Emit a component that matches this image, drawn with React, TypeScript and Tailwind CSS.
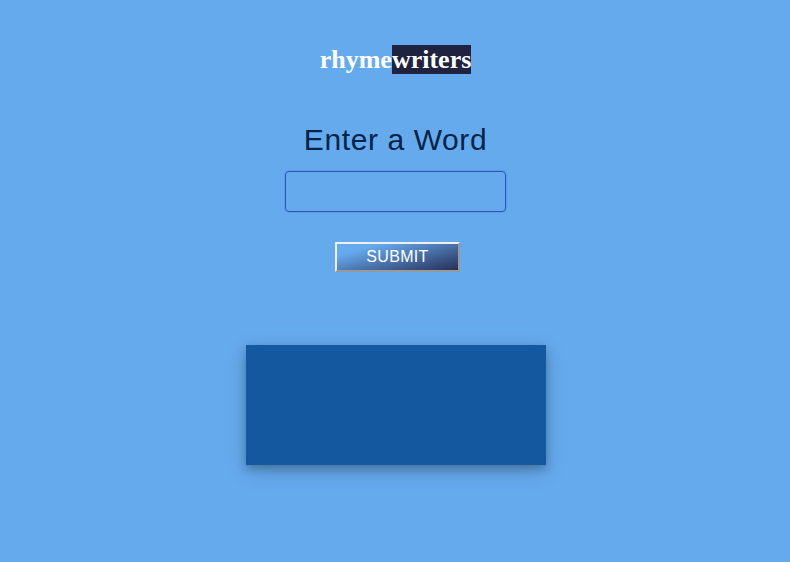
export default function App() {
  return (
    <main className="flex min-h-screen flex-col items-center bg-[#66aaee] pl-px font-['Liberation_Sans',Arial,sans-serif]">
      <h1 className="mt-11 font-['Liberation_Serif','Times_New_Roman',serif] text-[26px] leading-8 font-bold text-white">
        rhyme<span className="bg-[#1f2340]">writers</span>
      </h1>
      <form className="flex flex-col items-center" onSubmit={(e) => e.preventDefault()}>
        <label htmlFor="word" className="mt-11 text-3xl leading-10 tracking-[0.02em] text-[#06244a]">
          Enter a Word
        </label>
        <input
          id="word"
          type="text"
          className="mt-[11px] h-[41px] w-[221px] rounded border border-[#2f55b0] bg-transparent px-3 text-white shadow-[0_0_1px_1px_rgba(70,130,250,0.4)] outline-none"
        />
        <button
          type="submit"
          className="mt-[30px] ml-1 h-[30px] w-[125px] border-2 border-t-[#efefef] border-r-[#999999] border-b-[#999999] border-l-[#efefef] bg-linear-165 from-[#66aaee] from-20% to-[#27315a] text-base leading-6 tracking-[0.02em] text-white"
        >
          SUBMIT
        </button>
      </form>
      <section aria-label="Rhymes" className="mt-[73px] h-[120px] w-[300px] bg-[#1458a0] shadow-[0_4px_8px_0_rgba(0,0,0,0.2),0_6px_20px_0_rgba(0,0,0,0.19)]" />
    </main>
  );
}
